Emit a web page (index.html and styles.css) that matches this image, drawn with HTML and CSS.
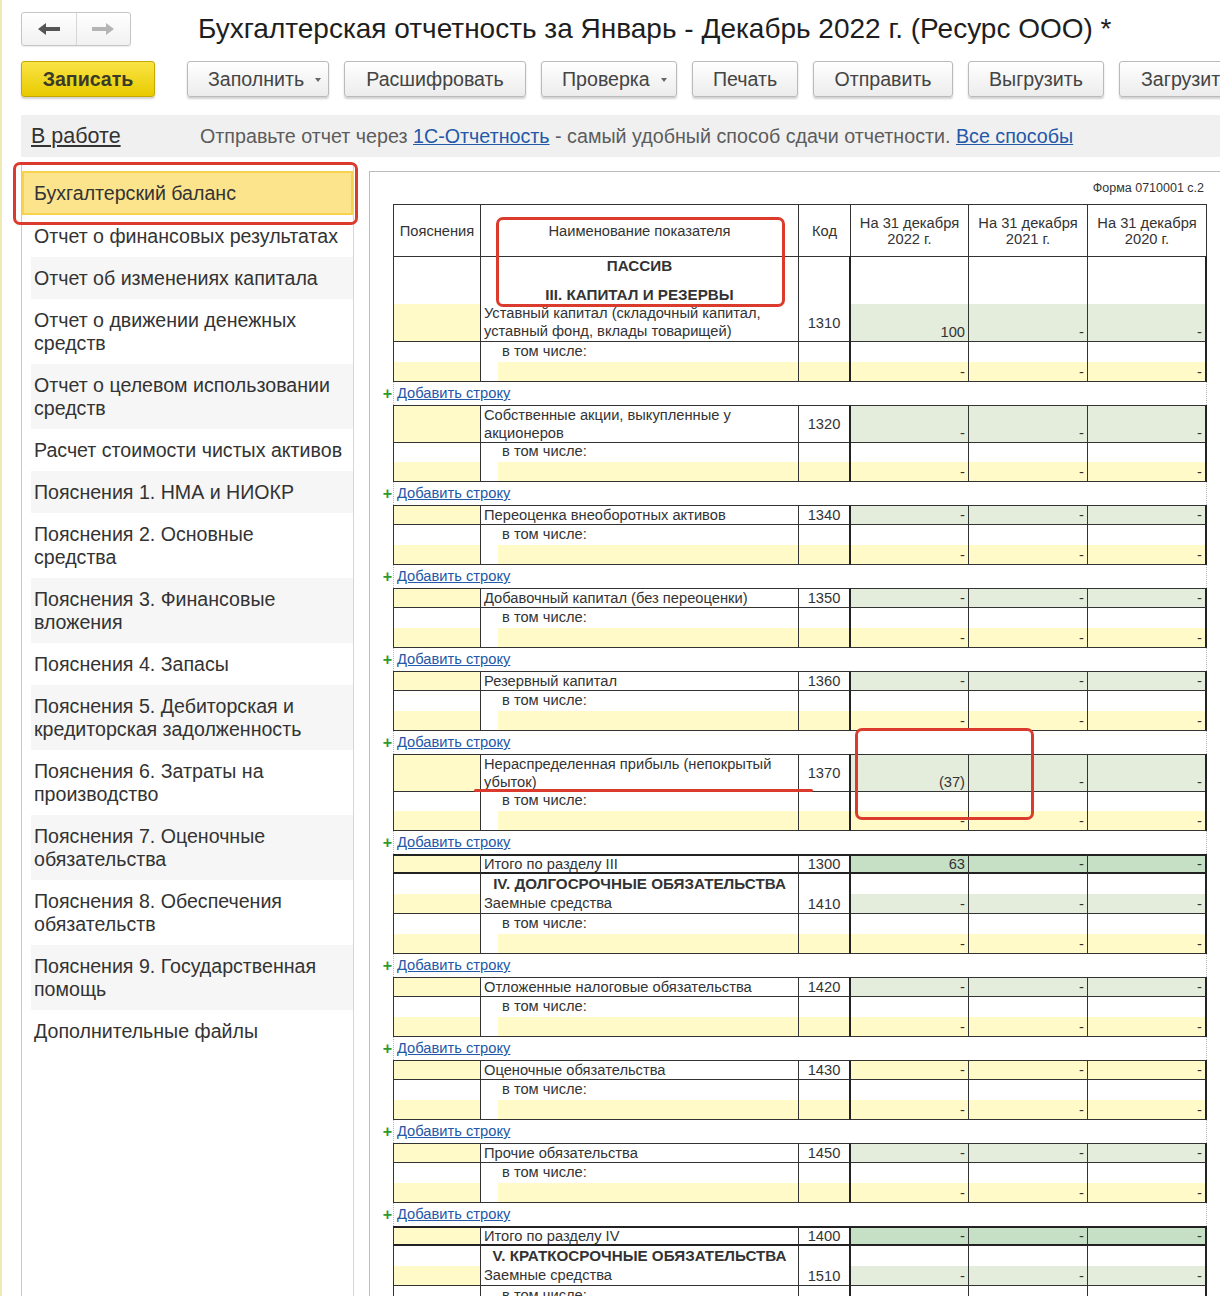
FILE: index.html
```html
<!DOCTYPE html>
<html lang="ru">
<head>
<meta charset="utf-8">
<title>Бухгалтерская отчетность</title>
<link rel="stylesheet" href="styles.css">
</head>
<body>
<div class="app">
  <header class="topbar">
    <div class="navgroup">
      <button class="navbtn"><svg width="22" height="12" viewBox="0 0 22 12"><path d="M0 6 L8 0 L8 4 L22 4 L22 8 L8 8 L8 12 Z" fill="#555"/></svg></button>
      <button class="navbtn"><svg width="22" height="12" viewBox="0 0 22 12"><path d="M22 6 L14 0 L14 4 L0 4 L0 8 L14 8 L14 12 Z" fill="#b4b4b4"/></svg></button>
    </div>
    <h1 class="title">Бухгалтерская отчетность за Январь - Декабрь 2022 г. (Ресурс ООО) *</h1>
  </header>

  <div class="toolbar">
    <button class="btn btn-primary">Записать</button>
    <button class="btn b-fill b-menu">Заполнить <span class="caret"></span></button>
    <button class="btn b-decode">Расшифровать</button>
    <button class="btn b-check b-menu">Проверка <span class="caret"></span></button>
    <button class="btn b-print">Печать</button>
    <button class="btn b-send">Отправить</button>
    <button class="btn b-export">Выгрузить</button>
    <button class="btn b-import">Загрузить</button>
  </div>

  <div class="infobar">
    <a class="status">В работе</a>
    <span class="hint">Отправьте отчет через <a class="link">1С-Отчетность</a> - самый удобный способ сдачи отчетности. <a class="link">Все способы</a></span>
  </div>

  <div class="layout">
    <nav class="sidebar">
      <div class="item active">Бухгалтерский баланс</div>
      <div class="item">Отчет о финансовых результатах</div>
      <div class="item">Отчет об изменениях капитала</div>
      <div class="item">Отчет о движении денежных<br>средств</div>
      <div class="item">Отчет о целевом использовании<br>средств</div>
      <div class="item">Расчет стоимости чистых активов</div>
      <div class="item">Пояснения 1. НМА и НИОКР</div>
      <div class="item">Пояснения 2. Основные<br>средства</div>
      <div class="item">Пояснения 3. Финансовые<br>вложения</div>
      <div class="item">Пояснения 4. Запасы</div>
      <div class="item">Пояснения 5. Дебиторская и<br>кредиторская задолженность</div>
      <div class="item">Пояснения 6. Затраты на<br>производство</div>
      <div class="item">Пояснения 7. Оценочные<br>обязательства</div>
      <div class="item">Пояснения 8. Обеспечения<br>обязательств</div>
      <div class="item">Пояснения 9. Государственная<br>помощь</div>
      <div class="item">Дополнительные файлы</div>
    </nav>

    <section class="pane">
      <div class="sheet">
        <div class="form-no">Форма 0710001 с.2</div>

        <div class="r hd">
          <div class="g"></div><div class="p">Пояснения</div><div class="n">Наименование показателя</div><div class="k">Код</div>
          <div class="v">На 31 декабря<br>2022 г.</div><div class="v">На 31 декабря<br>2021 г.</div><div class="v">На 31 декабря<br>2020 г.</div>
        </div>

        <!-- 1310 -->
        <div class="r pre bt h48">
          <div class="g"></div><div class="p"></div><div class="n sec two"><b>ПАССИВ</b><b>III. КАПИТАЛ И РЕЗЕРВЫ</b></div><div class="k"></div><div class="v"></div><div class="v"></div><div class="v"></div>
        </div>
        <div class="r mr h38">
          <div class="g"></div><div class="p y"></div><div class="n">Уставный капитал (складочный капитал,<br>уставный фонд, вклады товарищей)</div><div class="k">1310</div><div class="v gr">100</div><div class="v gr">-</div><div class="v gr">-</div>
        </div>
        <div class="r s1"><div class="g"></div><div class="p"></div><div class="n in">в том числе:</div><div class="k"></div><div class="v"></div><div class="v"></div><div class="v"></div></div>
        <div class="r s2"><div class="g"></div><div class="p y"></div><div class="n yi"></div><div class="k y"></div><div class="v y">-</div><div class="v y">-</div><div class="v y">-</div></div>
        <div class="r add"><div class="g">+</div><div class="al"><a class="link">Добавить строку</a></div></div>

        <!-- 1320 -->
        <div class="r mr bt h37">
          <div class="g"></div><div class="p y"></div><div class="n">Собственные акции, выкупленные у<br>акционеров</div><div class="k">1320</div><div class="v gr">-</div><div class="v gr">-</div><div class="v gr">-</div>
        </div>
        <div class="r s1"><div class="g"></div><div class="p"></div><div class="n in">в том числе:</div><div class="k"></div><div class="v"></div><div class="v"></div><div class="v"></div></div>
        <div class="r s2"><div class="g"></div><div class="p y"></div><div class="n yi"></div><div class="k y"></div><div class="v y">-</div><div class="v y">-</div><div class="v y">-</div></div>
        <div class="r add"><div class="g">+</div><div class="al"><a class="link">Добавить строку</a></div></div>

        <!-- 1340 -->
        <div class="r mr bt h20">
          <div class="g"></div><div class="p y"></div><div class="n">Переоценка внеоборотных активов</div><div class="k">1340</div><div class="v gr">-</div><div class="v gr">-</div><div class="v gr">-</div>
        </div>
        <div class="r s1"><div class="g"></div><div class="p"></div><div class="n in">в том числе:</div><div class="k"></div><div class="v"></div><div class="v"></div><div class="v"></div></div>
        <div class="r s2"><div class="g"></div><div class="p y"></div><div class="n yi"></div><div class="k y"></div><div class="v y">-</div><div class="v y">-</div><div class="v y">-</div></div>
        <div class="r add"><div class="g">+</div><div class="al"><a class="link">Добавить строку</a></div></div>

        <!-- 1350 -->
        <div class="r mr bt h20">
          <div class="g"></div><div class="p y"></div><div class="n">Добавочный капитал (без переоценки)</div><div class="k">1350</div><div class="v gr">-</div><div class="v gr">-</div><div class="v gr">-</div>
        </div>
        <div class="r s1"><div class="g"></div><div class="p"></div><div class="n in">в том числе:</div><div class="k"></div><div class="v"></div><div class="v"></div><div class="v"></div></div>
        <div class="r s2"><div class="g"></div><div class="p y"></div><div class="n yi"></div><div class="k y"></div><div class="v y">-</div><div class="v y">-</div><div class="v y">-</div></div>
        <div class="r add"><div class="g">+</div><div class="al"><a class="link">Добавить строку</a></div></div>

        <!-- 1360 -->
        <div class="r mr bt h20">
          <div class="g"></div><div class="p y"></div><div class="n">Резервный капитал</div><div class="k">1360</div><div class="v gr">-</div><div class="v gr">-</div><div class="v gr">-</div>
        </div>
        <div class="r s1"><div class="g"></div><div class="p"></div><div class="n in">в том числе:</div><div class="k"></div><div class="v"></div><div class="v"></div><div class="v"></div></div>
        <div class="r s2"><div class="g"></div><div class="p y"></div><div class="n yi"></div><div class="k y"></div><div class="v y">-</div><div class="v y">-</div><div class="v y">-</div></div>
        <div class="r add"><div class="g">+</div><div class="al"><a class="link">Добавить строку</a></div></div>

        <!-- 1370 -->
        <div class="r mr bt h37">
          <div class="g"></div><div class="p y"></div><div class="n">Нераспределенная прибыль (непокрытый<br>убыток)</div><div class="k">1370</div><div class="v gr">(37)</div><div class="v gr">-</div><div class="v gr">-</div>
        </div>
        <div class="r s1"><div class="g"></div><div class="p"></div><div class="n in">в том числе:</div><div class="k"></div><div class="v"></div><div class="v"></div><div class="v"></div></div>
        <div class="r s2"><div class="g"></div><div class="p y"></div><div class="n yi"></div><div class="k y"></div><div class="v y">-</div><div class="v y">-</div><div class="v y">-</div></div>
        <div class="r add"><div class="g">+</div><div class="al"><a class="link">Добавить строку</a></div></div>

        <!-- 1300 -->
        <div class="r tot">
          <div class="g"></div><div class="p y"></div><div class="n">Итого по разделу III</div><div class="k">1300</div><div class="v dg">63</div><div class="v dg">-</div><div class="v dg">-</div>
        </div>

        <!-- 1410 -->
        <div class="r pre h20">
          <div class="g"></div><div class="p"></div><div class="n sec"><b>IV. ДОЛГОСРОЧНЫЕ ОБЯЗАТЕЛЬСТВА</b></div><div class="k"></div><div class="v"></div><div class="v"></div><div class="v"></div>
        </div>
        <div class="r mr h20">
          <div class="g"></div><div class="p y"></div><div class="n">Заемные средства</div><div class="k">1410</div><div class="v gr">-</div><div class="v gr">-</div><div class="v gr">-</div>
        </div>
        <div class="r s1"><div class="g"></div><div class="p"></div><div class="n in">в том числе:</div><div class="k"></div><div class="v"></div><div class="v"></div><div class="v"></div></div>
        <div class="r s2"><div class="g"></div><div class="p y"></div><div class="n yi"></div><div class="k y"></div><div class="v y">-</div><div class="v y">-</div><div class="v y">-</div></div>
        <div class="r add"><div class="g">+</div><div class="al"><a class="link">Добавить строку</a></div></div>

        <!-- 1420 -->
        <div class="r mr bt h20">
          <div class="g"></div><div class="p y"></div><div class="n">Отложенные налоговые обязательства</div><div class="k">1420</div><div class="v gr">-</div><div class="v gr">-</div><div class="v gr">-</div>
        </div>
        <div class="r s1"><div class="g"></div><div class="p"></div><div class="n in">в том числе:</div><div class="k"></div><div class="v"></div><div class="v"></div><div class="v"></div></div>
        <div class="r s2"><div class="g"></div><div class="p y"></div><div class="n yi"></div><div class="k y"></div><div class="v y">-</div><div class="v y">-</div><div class="v y">-</div></div>
        <div class="r add"><div class="g">+</div><div class="al"><a class="link">Добавить строку</a></div></div>

        <!-- 1430 -->
        <div class="r mr bt h20">
          <div class="g"></div><div class="p y"></div><div class="n">Оценочные обязательства</div><div class="k">1430</div><div class="v y">-</div><div class="v y">-</div><div class="v y">-</div>
        </div>
        <div class="r s1"><div class="g"></div><div class="p"></div><div class="n in">в том числе:</div><div class="k"></div><div class="v"></div><div class="v"></div><div class="v"></div></div>
        <div class="r s2"><div class="g"></div><div class="p y"></div><div class="n yi"></div><div class="k y"></div><div class="v y">-</div><div class="v y">-</div><div class="v y">-</div></div>
        <div class="r add"><div class="g">+</div><div class="al"><a class="link">Добавить строку</a></div></div>

        <!-- 1450 -->
        <div class="r mr bt h20">
          <div class="g"></div><div class="p y"></div><div class="n">Прочие обязательства</div><div class="k">1450</div><div class="v gr">-</div><div class="v gr">-</div><div class="v gr">-</div>
        </div>
        <div class="r s1"><div class="g"></div><div class="p"></div><div class="n in">в том числе:</div><div class="k"></div><div class="v"></div><div class="v"></div><div class="v"></div></div>
        <div class="r s2"><div class="g"></div><div class="p y"></div><div class="n yi"></div><div class="k y"></div><div class="v y">-</div><div class="v y">-</div><div class="v y">-</div></div>
        <div class="r add"><div class="g">+</div><div class="al"><a class="link">Добавить строку</a></div></div>

        <!-- 1400 -->
        <div class="r tot">
          <div class="g"></div><div class="p y"></div><div class="n">Итого по разделу IV</div><div class="k">1400</div><div class="v dg">-</div><div class="v dg">-</div><div class="v dg">-</div>
        </div>

        <!-- 1510 -->
        <div class="r pre h20">
          <div class="g"></div><div class="p"></div><div class="n sec"><b>V. КРАТКОСРОЧНЫЕ ОБЯЗАТЕЛЬСТВА</b></div><div class="k"></div><div class="v"></div><div class="v"></div><div class="v"></div>
        </div>
        <div class="r mr h20">
          <div class="g"></div><div class="p y"></div><div class="n">Заемные средства</div><div class="k">1510</div><div class="v gr">-</div><div class="v gr">-</div><div class="v gr">-</div>
        </div>
        <div class="r s1"><div class="g"></div><div class="p"></div><div class="n in">в том числе:</div><div class="k"></div><div class="v"></div><div class="v"></div><div class="v"></div></div>
        <div class="r s2"><div class="g"></div><div class="p y"></div><div class="n yi"></div><div class="k y"></div><div class="v y">-</div><div class="v y">-</div><div class="v y">-</div></div>
      </div>
    </section>
  </div>

  <div class="mark mark-side"></div>
  <div class="mark mark-head"></div>
  <div class="mark-line"></div>
  <div class="mark mark-val"></div>
</div>
</body>
</html>
```

FILE: styles.css
```css
* { box-sizing: border-box; }
html, body { margin: 0; padding: 0; }
body {
  background: #fff;
  font-family: "Liberation Sans", Arial, sans-serif;
  color: #333;
  overflow: hidden;
}
.app {
  position: relative;
  width: 1220px;
  height: 1296px;
  overflow: hidden;
  border-left: 2px solid #efe9b4;
}

/* top bar */
.topbar {
  display: flex;
  align-items: center;
  height: 46px;
  padding: 12px 0 0 19px;
}
.navgroup {
  display: flex;
  width: 110px;
  height: 34px;
  border: 1px solid #c6c6c6;
  border-radius: 3px;
  background: linear-gradient(#ffffff, #f1f1f1);
  box-shadow: 0 1px 1px rgba(0,0,0,0.08);
}
.navbtn {
  flex: 1;
  border: 0;
  background: transparent;
  padding: 0;
  display: flex;
  align-items: center;
  justify-content: center;
}
.navbtn + .navbtn { border-left: 1px solid #d6d6d6; }
.title {
  margin: 0 0 0 67px;
  font-size: 28px;
  font-weight: normal;
  line-height: 34px;
  color: #1e1e1e;
  white-space: nowrap;
}

/* toolbar */
.toolbar {
  display: flex;
  gap: 15px;
  padding: 15px 0 0 19px;
  white-space: nowrap;
}
.btn {
  flex: none;
  height: 36px;
  padding: 0;
  font-family: "Liberation Sans", Arial, sans-serif;
  font-size: 19.6px;
  color: #444;
  background: linear-gradient(#ffffff, #ececec);
  border: 1px solid #bababa;
  border-radius: 3px;
  box-shadow: 0 2px 2px rgba(0,0,0,0.18);
  display: flex;
  align-items: center;
  justify-content: center;
  gap: 8px;
}
.btn-primary {
  width: 134px;
  font-weight: bold;
  color: #3a3a2a;
  background: linear-gradient(#fae445, #e9ca00);
  border-color: #c5a800;
  margin-right: 17px;
}
.b-menu { justify-content: flex-start; padding-left: 20px; gap: 11px; }
.b-fill { width: 142px; }
.b-decode { width: 182px; }
.b-check { width: 136px; }
.b-print { width: 106px; }
.b-send { width: 140px; }
.b-export { width: 136px; }
.b-import { width: 136px; justify-content: flex-start; padding-left: 21px; }
.caret {
  width: 0; height: 0;
  border-left: 3px solid transparent;
  border-right: 3px solid transparent;
  border-top: 4px solid #666;
  margin-top: 2px;
}

/* info bar */
.infobar {
  margin: 18px 0 0 19px;
  height: 42px;
  background: #f0f0f0;
  display: flex;
  align-items: center;
  padding-left: 10px;
  white-space: nowrap;
}
.status {
  width: 169px;
  font-size: 21.5px;
  color: #333;
  text-decoration: underline;
}
.hint {
  font-size: 19.7px;
  color: #5c5c5c;
}
.link {
  color: #2458a8;
  text-decoration: underline;
}

/* main layout */
.layout {
  display: flex;
  margin-top: 6px;
  padding-left: 19px;
  height: 1200px;
}
.sidebar {
  flex: none;
  width: 333px;
  padding-top: 8px;
  border-left: 1px solid #c9c9c9;
  border-right: 1px solid #d6d6d6;
}
.item {
  margin-left: 9px;
  padding: 9.5px 6px 9.5px 3px;
  font-size: 19.6px;
  line-height: 23px;
  color: #333;
  white-space: nowrap;
}
.item:nth-child(odd) { background: #f6f6f6; }
.item.active {
  margin-left: 0;
  padding: 8.5px 6px 8.5px 10px;
  background: #fce48d;
  border: 2px solid #f6d24e;
}

.pane {
  flex: 1;
  margin: 8px 0 0 15px;
  border-top: 1px solid #bdbdbd;
  border-left: 1px solid #bdbdbd;
  padding: 8px 0 0 10px;
}
.sheet { width: 827px; }
.form-no {
  text-align: right;
  padding-right: 3px;
  font-size: 12.5px;
  line-height: 16px;
  color: #333;
  margin-bottom: 8px;
}

/* spreadsheet rows */
.r {
  display: grid;
  grid-template-columns: 13px 88px 318px 52px 118px 119px 119px;
  height: 20px;
  font-size: 14.7px;
  line-height: 18px;
  color: #333;
}
.r > div { min-width: 0; }
.r > .p { border-left: 1px solid #333; border-right: 1px solid #333; }
.r > .n { border-right: 1px solid #333; padding: 0 3px; white-space: nowrap; }
.r > .k {
  border-right: 2px solid #222;
  display: flex; align-items: center; justify-content: center;
}
.r > .v {
  border-right: 1px solid #333;
  display: flex; align-items: flex-end; justify-content: flex-end;
  padding-right: 3px;
}
.r > .v:last-child { border-right: 2px solid #222; }

.h20 { height: 20px; }
.h37 { height: 37px; }
.h38 { height: 38px; }
.h48 { height: 48px; }

.hd { height: 52px; }
.hd > div:not(.g) { border-top: 1px solid #333; }
.hd > .k, .hd > .v:last-child { border-right-width: 1px; border-right-color: #333; }
.hd > .p, .hd > .n, .hd > .v {
  display: flex; align-items: center; justify-content: center;
  text-align: center; line-height: 16px; padding: 0;
}

.bt > div:not(.g) { border-top: 1px solid #333; }
.bt > .v { border-top: 2px solid #222; }
.mr > div:not(.g) { border-bottom: 1px solid #333; }
.s2 > div:not(.g) { border-bottom: 1px solid #333; }
.s2 > .v { border-bottom: 2px solid #222; }
.tot > div:not(.g) { border-top: 2px solid #222; border-bottom: 2px solid #222; }
.tot > .n, .tot > .k, .tot > .v { line-height: 16px; }

.sec {
  display: flex;
  flex-direction: column;
  align-items: center;
  font-weight: bold;
  font-size: 15.2px;
  line-height: 20px;
}
.sec.two { justify-content: space-between; line-height: 18px; }
.n.in { padding-left: 21px; }

.y { background: #fffac8; }
.gr { background: #e4ecdb; }
.dg { background: #c6e0c5; }
.n.yi { background: linear-gradient(to right, #fff 17px, #fffac8 17px); }

.add { height: 23px; }
.add > .g {
  color: #2d9a2d;
  font-weight: bold;
  font-size: 16px;
  line-height: 23px;
  text-align: center;
  padding-left: 2px;
}
.add > .al {
  grid-column: span 6;
  border-left: 1px dotted #b5b5b5;
  border-right: 1px dotted #b5b5b5;
  padding-left: 3px;
  line-height: 23px;
  font-size: 14.7px;
}

/* annotation marks */
.mark {
  position: absolute;
  border: 3px solid #db3b2c;
  border-radius: 7px;
}
.mark-side { left: 11px; top: 162px; width: 345px; height: 63px; }
.mark-head { left: 494px; top: 217px; width: 289px; height: 90px; }
.mark-val  { left: 853px; top: 728px; width: 179px; height: 92px; }
.mark-line {
  position: absolute;
  left: 472px; top: 789px;
  width: 339px; height: 3px;
  border-radius: 2px;
  background: #db3b2c;
}
```
